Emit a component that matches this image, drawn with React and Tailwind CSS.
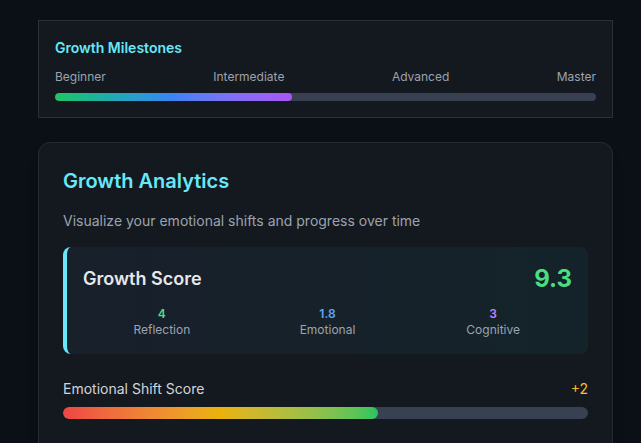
import React from 'react';

const milestones = ['Beginner', 'Intermediate', 'Advanced', 'Master'];

const stats = [
  { value: '4', label: 'Reflection', color: 'text-[#4ade80]' },
  { value: '1.8', label: 'Emotional', color: 'text-[#60a5fa]' },
  { value: '3', label: 'Cognitive', color: 'text-[#c084fc]' },
];

const App = () => (
  <div
    className="min-h-screen bg-[#0b0f16] pt-5 pl-[38px] overflow-hidden"
    style={{ fontFamily: 'Inter, "Noto Sans", sans-serif' }}
  >
    <div className="w-[575px]">
      {/* Milestones */}
      <div className="border border-[#2a2f38] bg-[#141920] px-4 pt-[17px] pb-4">
        <h3 className="text-sm font-semibold text-[#67e8f9] mb-[11px]">Growth Milestones</h3>
        <div className="flex justify-between text-xs text-[#9ca3af] mb-2">
          {milestones.map((m) => <span key={m}>{m}</span>)}
        </div>
        <div className="h-2 rounded-full bg-[#374151] overflow-hidden">
          <div className="h-full w-[43.8%] rounded-full bg-gradient-to-r from-[#22c55e] via-[#3b82f6] to-[#a855f7]" />
        </div>
      </div>

      {/* Analytics */}
      <div className="mt-6 rounded-xl border border-[#262b33] bg-[#141920] p-6 pb-10 shadow-lg">
        <h2 className="text-xl font-semibold text-[#67e8f9] mb-4">Growth Analytics</h2>
        <p className="text-sm text-[#9ca3af] mb-4">Visualize your emotional shifts and progress over time</p>

        <div className="rounded-lg border-l-4 border-[#67e8f9] bg-gradient-to-r from-[#18202a] to-[#14232a] p-4">
          <div className="flex items-center justify-between">
            <span className="text-lg font-semibold text-[#e5e7eb]">Growth Score</span>
            <span className="text-2xl font-bold text-[#4ade80]">9.3</span>
          </div>
          <div className="grid grid-cols-3 gap-2 mt-[11px] text-center">
            {stats.map((s) => (
              <div key={s.label}>
                <div className={`text-xs font-semibold ${s.color}`}>{s.value}</div>
                <div className="text-xs text-[#9ca3af]">{s.label}</div>
              </div>
            ))}
          </div>
        </div>

        <div className="mt-[25px]">
          <div className="flex justify-between text-sm mb-2">
            <span className="text-[#d1d5db]">Emotional Shift Score</span>
            <span className="text-[#fbbf24]">+2</span>
          </div>
          <div className="h-3 rounded-full bg-[#374151] overflow-hidden">
            <div className="h-full w-[60%] rounded-full bg-gradient-to-r from-[#ef4444] via-[#eab308] to-[#22c55e]" />
          </div>
        </div>
      </div>
    </div>
  </div>
);

export default App;
